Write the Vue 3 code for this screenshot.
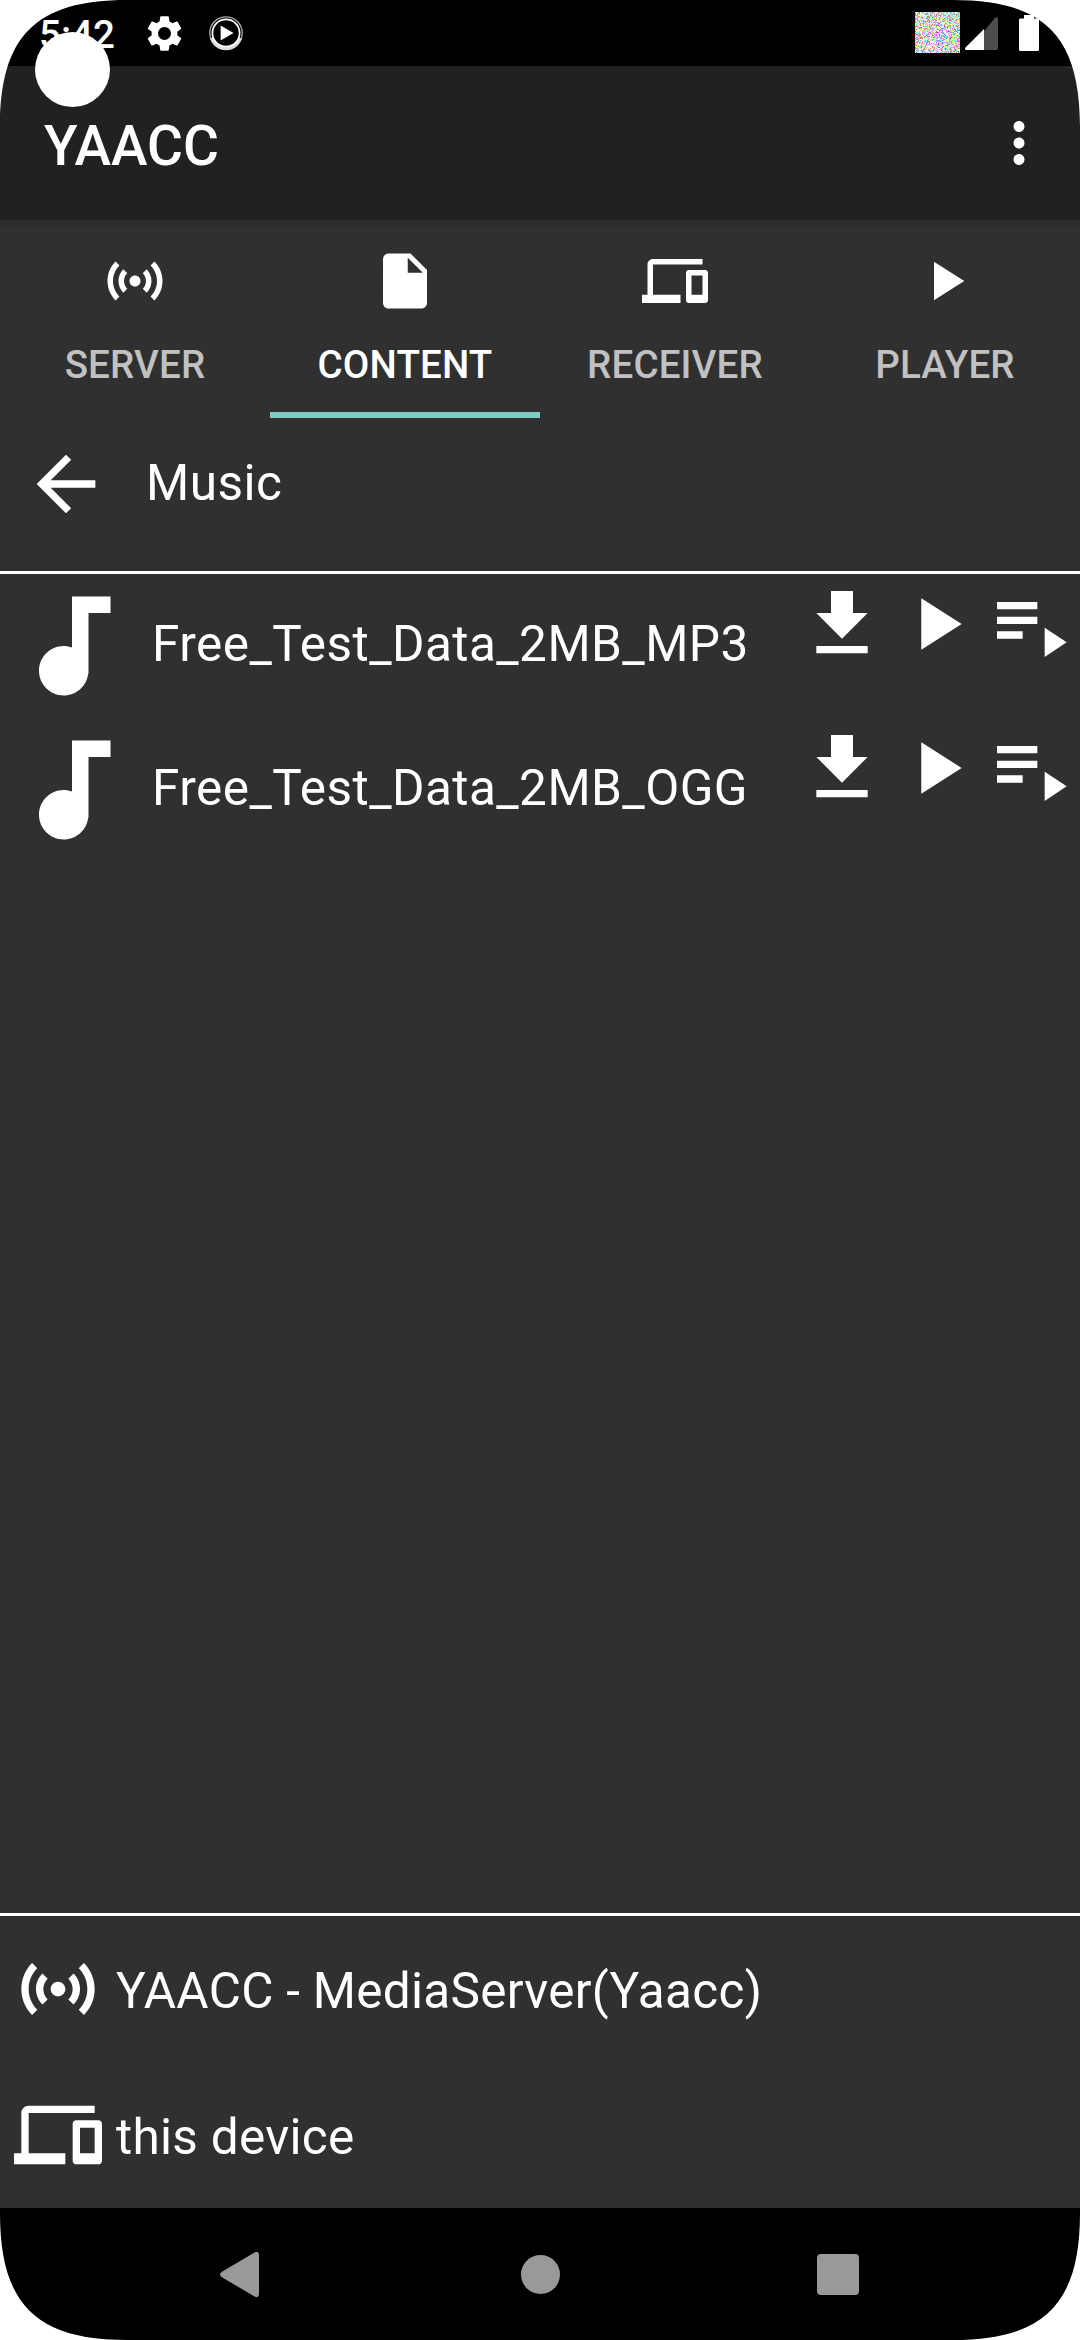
<script setup>
const icons = {
  sensors:
    'M7.76 16.24C6.67 15.16 6 13.66 6 12s.67-3.16 1.76-4.24l1.42 1.42C8.45 9.9 8 10.9 8 12c0 1.1.45 2.1 1.17 2.83l-1.41 1.41zm8.48 0C17.33 15.16 18 13.66 18 12s-.67-3.16-1.76-4.24l-1.42 1.42C15.55 9.9 16 10.9 16 12c0 1.1-.45 2.1-1.17 2.83l1.41 1.41zM12 10c-1.1 0-2 .9-2 2s.9 2 2 2 2-.9 2-2-.9-2-2-2zm8 2c0 2.21-.9 4.21-2.35 5.65l1.42 1.42C20.88 17.26 22 14.76 22 12s-1.12-5.26-2.93-7.07l-1.42 1.42C19.1 7.79 20 9.79 20 12zM6.35 6.35L4.93 4.93C3.12 6.74 2 9.24 2 12s1.12 5.26 2.93 7.07l1.42-1.42C4.9 16.21 4 14.21 4 12s.9-4.21 2.35-5.65z',
  file: 'M6 2c-1.1 0-1.99.9-1.99 2L4 20c0 1.1.89 2 1.99 2H18c1.1 0 2-.9 2-2V8l-6-6H6zm7 7V3.5L18.5 9H13z',
  devices:
    'M4 6h18V4H4c-1.1 0-2 .9-2 2v11H0v3h14v-3H4V6zm19 2h-6c-.55 0-1 .45-1 1v10c0 .55.45 1 1 1h6c.55 0 1-.45 1-1V9c0-.55-.45-1-1-1zm-1 9h-4v-7h4v7z',
  play: 'M8 5v14l11-7z',
  more: 'M12 8c1.1 0 2-.9 2-2s-.9-2-2-2-2 .9-2 2 .9 2 2 2zm0 2c-1.1 0-2 .9-2 2s.9 2 2 2 2-.9 2-2-.9-2-2-2zm0 6c-1.1 0-2 .9-2 2s.9 2 2 2 2-.9 2-2-.9-2-2-2z',
  back: 'M20 11H7.83l5.59-5.59L12 4l-8 8 8 8 1.41-1.41L7.83 13H20v-2z',
  audio:
    'M12 3v9.28c-.47-.17-.97-.28-1.5-.28C8.01 12 6 14.01 6 16.5S8.01 21 10.5 21c2.31 0 4.2-1.75 4.45-4H15V6h4V3h-7z',
  download: 'M19 9h-4V3H9v6H5l7 7 7-7zM5 18v2h14v-2H5z',
  queue: 'M3 10h11v2H3zM3 6h11v2H3zM3 14h7v2H3zM16 13v8l6-4z',
  settings:
    'M19.14 12.94c.04-.3.06-.61.06-.94 0-.32-.02-.64-.07-.94l2.03-1.58c.18-.14.23-.41.12-.61l-1.92-3.32c-.12-.22-.37-.29-.59-.22l-2.39.96c-.5-.38-1.03-.7-1.62-.94l-.36-2.54c-.04-.24-.24-.41-.48-.41h-3.84c-.24 0-.43.17-.47.41l-.36 2.54c-.59.24-1.13.57-1.62.94l-2.39-.96c-.22-.08-.47 0-.59.22L2.74 8.87c-.12.21-.08.47.12.61l2.03 1.58c-.05.3-.09.63-.09.94s.02.64.07.94l-2.03 1.58c-.18.14-.23.41-.12.61l1.92 3.32c.12.22.37.29.59.22l2.39-.96c.5.38 1.03.7 1.62.94l.36 2.54c.05.24.24.41.48.41h3.84c.24 0 .44-.17.47-.41l.36-2.54c.59-.24 1.13-.56 1.62-.94l2.39.96c.22.08.47 0 .59-.22l1.92-3.32c.12-.22.07-.47-.12-.61l-2.01-1.58zM12 15.6c-1.98 0-3.6-1.62-3.6-3.6s1.62-3.6 3.6-3.6 3.6 1.62 3.6 3.6-1.62 3.6-3.6 3.6z',
}

const tabs = [
  { label: 'SERVER', icon: icons.sensors },
  { label: 'CONTENT', icon: icons.file, active: true },
  { label: 'RECEIVER', icon: icons.devices },
  { label: 'PLAYER', icon: icons.play },
]
const tracks = ['Free_Test_Data_2MB_MP3', 'Free_Test_Data_2MB_OGG']
const actions = [icons.download, icons.play, icons.queue]
const targets = [
  { label: 'YAACC - MediaServer(Yaacc)', icon: icons.sensors },
  { label: 'this device', icon: icons.devices },
]

// Speckled status icon: one bright random colour per pixel, seeded so it stays stable.
let seed = 20471
const rand = () => {
  seed = (seed * 1103515245 + 12345) % 2147483648
  return seed / 2147483648
}
const channel = () => Math.min(255, Math.round(90 + rand() * 290))
const speckles = []
for (let y = 0; y < 41; y++) {
  for (let x = 0; x < 45; x++) {
    speckles.push({ x, y, fill: `rgb(${channel()},${channel()},${channel()})` })
  }
}
</script>

<template>
  <div class="screen">
    <header class="status">
      <span class="clock">5:42</span>
      <svg class="gear" viewBox="0 0 24 24"><path :d="icons.settings" /></svg>
      <svg class="ring" viewBox="0 0 36 36">
        <circle cx="18" cy="18" r="16.2" fill="none" stroke="#aaa" stroke-width="1.3" />
        <path d="M3.5 23A15.2 15.2 0 0 0 32.5 23" fill="none" stroke="#ddd" stroke-width="3" />
        <circle cx="18" cy="18" r="13.6" fill="none" stroke="#fff" stroke-width="1.7" />
        <path d="M12.6 10.5v15l13-7.5z" />
      </svg>
      <span class="spacer"></span>
      <svg class="speckle" viewBox="0 0 45 41" shape-rendering="crispEdges">
        <rect v-for="(s, i) in speckles" :key="i" :x="s.x" :y="s.y" width="1" height="1" :fill="s.fill" />
      </svg>
      <svg class="signal" viewBox="0 0 33 33">
        <path d="M19 14L30 1q3-2 3 1v29q0 2-2 2H19z" fill="#4d4d4d" />
        <path d="M19 12v21H1.5q-2.5-.5-1-2.5z" />
      </svg>
      <svg class="battery" viewBox="0 0 20 36">
        <path d="M5 0h10v3.5h3.5q1.5 0 1.5 1.5v29.500q0 1.500-1.500 1.500h-17q-1.500 0-1.500-1.500V5q0-1.500 1.500-1.500H5z" />
      </svg>
    </header>

    <div class="appbar">
      <h1 class="title">YAACC</h1>
      <svg class="i66" viewBox="0 0 24 24"><path :d="icons.more" /></svg>
    </div>

    <nav class="tabs">
      <div v-for="t in tabs" :key="t.label" class="tab" :class="{ active: t.active }">
        <svg class="i66" viewBox="0 0 24 24"><path :d="t.icon" /></svg>
        <span class="tab-label">{{ t.label }}</span>
      </div>
    </nav>

    <div class="crumb">
      <svg class="i88" viewBox="0 0 24 24"><path :d="icons.back" /></svg>
      <span class="text">Music</span>
    </div>

    <main class="list">
      <div v-for="name in tracks" :key="name" class="track">
        <svg class="i132" viewBox="0 0 24 24"><path :d="icons.audio" /></svg>
        <span class="text">{{ name }}</span>
        <div class="actions">
          <svg v-for="(a, i) in actions" :key="i" class="i88" viewBox="0 0 24 24"><path :d="a" /></svg>
        </div>
      </div>
    </main>

    <footer class="targets">
      <div v-for="t in targets" :key="t.label" class="target">
        <svg class="i88" viewBox="0 0 24 24"><path :d="t.icon" /></svg>
        <span class="text">{{ t.label }}</span>
      </div>
    </footer>

    <div class="navbar">
      <svg class="nav-back" viewBox="0 0 39 45">
        <path d="M34.5.5Q39-1.5 39 3v39q0 4.500-4.500 2.500L1.500 25q-3-2.500 0-5z" />
      </svg>
      <span class="nav-home"></span>
      <span class="nav-recent"></span>
    </div>

    <div class="cutout"></div>
    <svg
      v-for="c in ['tl', 'tr', 'bl', 'br']"
      :key="c"
      class="corner"
      :class="c"
      viewBox="0 0 127 127"
    >
      <path d="M0 0V127C0 36 36 0 127 0z" />
    </svg>
  </div>
</template>

<style>
body {
  margin: 0;
  background: #fff;
}
</style>

<style scoped>
.screen {
  position: relative;
  display: flex;
  flex-direction: column;
  width: 1080px;
  height: 2340px;
  overflow: hidden;
  background: #303030;
  color: #fff;
  font-family: Roboto, 'Liberation Sans', sans-serif;
}
svg {
  display: block;
  flex: none;
  fill: #fff;
}
.i66 { width: 66px; height: 66px; }
.i88 { width: 88px; height: 88px; }
.i132 { width: 132px; height: 132px; }
.text {
  font-size: 49.5px;
  letter-spacing: 0.46px;
  line-height: 58px;
  white-space: nowrap;
}

.status {
  display: flex;
  align-items: flex-start;
  box-sizing: border-box;
  height: 66px;
  padding: 0 41px 0 39px;
  background: #000;
}
.clock {
  width: 104px;
  padding-top: 12px;
  font-size: 38.5px;
  font-weight: 500;
  line-height: 46px;
}
.gear { width: 43px; height: 43px; margin-top: 12px; }
.ring { width: 36px; height: 36px; margin: 15px 0 0 21.5px; }
.spacer { flex: 1; }
.speckle { width: 45px; height: 41px; margin-top: 12px; }
.signal { width: 33px; height: 33px; margin: 17px 0 0 5px; }
.battery { width: 20px; height: 36px; margin: 15px 0 0 21px; }

.appbar {
  display: flex;
  align-items: center;
  justify-content: space-between;
  height: 154px;
  padding: 0 28px 0 44px;
  background: #212121;
}
.title {
  margin: 6px 0 0;
  font-size: 55px;
  font-weight: 500;
  line-height: 64px;
}

.tabs {
  display: flex;
  height: 198px;
  background: linear-gradient(#2b2b2b, #303030 12px);
}
.tab {
  display: flex;
  flex: 1;
  flex-direction: column;
  align-items: center;
  box-sizing: border-box;
  padding-top: 28px;
  border-bottom: 6px solid transparent;
  color: #c1c1c1;
}
.tab.active {
  border-color: #80cbc4;
  color: #fff;
}
.tab-label {
  margin-top: 25px;
  font-size: 38.5px;
  font-weight: 500;
  letter-spacing: 0.15px;
  line-height: 52px;
}

.crumb {
  display: flex;
  box-sizing: border-box;
  height: 156px;
  padding: 22px 22px 0;
  border-bottom: 3px solid #fff;
}
.crumb .text { margin: 14px 0 0 36px; }

.list { flex: 1; }
.track {
  display: flex;
  box-sizing: border-box;
  height: 144px;
  padding: 6px 6px 0;
}
.track .text { margin: 35px 0 0 14px; }
.actions {
  display: flex;
  gap: 6px;
  margin-left: auto;
}

.targets {
  box-sizing: border-box;
  height: 295px;
  padding: 29px 14px 0;
  border-top: 3px solid #fff;
}
.target {
  display: flex;
  height: 146px;
}
.target .text {
  margin: 17px 0 0 14px;
  letter-spacing: 0.29px;
}

.navbar {
  display: flex;
  align-items: center;
  box-sizing: border-box;
  height: 132px;
  padding: 1px 0 0 220px;
  background: #000;
}
.nav-back { width: 39px; height: 45px; fill: #999; }
.nav-home {
  width: 39px;
  height: 39px;
  margin: 0 257px 0 262px;
  border-radius: 50%;
  background: #999;
}
.nav-recent { width: 41.5px; height: 41.5px; border-radius: 4px; background: #999; }

.cutout {
  position: absolute;
  top: 32px;
  left: 35px;
  width: 75px;
  height: 75px;
  border-radius: 50%;
  background: #fff;
}
.corner {
  position: absolute;
  width: 127px;
  height: 127px;
}
.tl { top: 0; left: 0; }
.tr { top: 0; right: 0; transform: scaleX(-1); }
.bl { bottom: 0; left: 0; transform: scaleY(-1); }
.br { right: 0; bottom: 0; transform: scale(-1); }
</style>
